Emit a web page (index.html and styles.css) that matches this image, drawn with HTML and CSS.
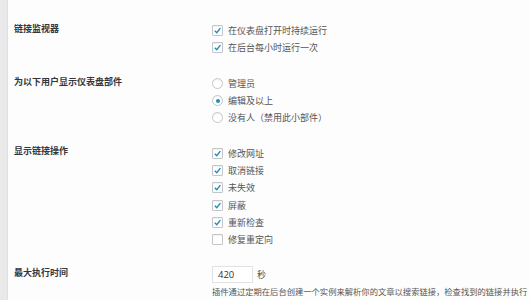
FILE: index.html
```
<!DOCTYPE html>
<html lang="zh-CN">
<head>
    <meta charset="UTF-8">
    <title>链接检查器设置</title>
    <link rel="stylesheet" href="styles.css">
</head>
<body>
    <div class="sidebar"></div>
    <div class="settings">
        <div class="row">
            <div class="row-label">链接监视器</div>
            <div class="row-field">
                <label class="opt"><span class="box on"><svg viewBox="0 0 10 10"><path d="M2 5.2 L4.2 7.4 L8.2 2.4"/></svg></span>在仪表盘打开时持续运行</label>
                <label class="opt"><span class="box on"><svg viewBox="0 0 10 10"><path d="M2 5.2 L4.2 7.4 L8.2 2.4"/></svg></span>在后台每小时运行一次</label>
            </div>
        </div>

        <div class="row">
            <div class="row-label">为以下用户显示仪表盘部件</div>
            <div class="row-field">
                <label class="opt"><span class="radio"></span>管理员</label>
                <label class="opt"><span class="radio on"></span>编辑及以上</label>
                <label class="opt"><span class="radio"></span>没有人（禁用此小部件）</label>
            </div>
        </div>

        <div class="row">
            <div class="row-label">显示链接操作</div>
            <div class="row-field">
                <label class="opt"><span class="box on"><svg viewBox="0 0 10 10"><path d="M2 5.2 L4.2 7.4 L8.2 2.4"/></svg></span>修改网址</label>
                <label class="opt"><span class="box on"><svg viewBox="0 0 10 10"><path d="M2 5.2 L4.2 7.4 L8.2 2.4"/></svg></span>取消链接</label>
                <label class="opt"><span class="box on"><svg viewBox="0 0 10 10"><path d="M2 5.2 L4.2 7.4 L8.2 2.4"/></svg></span>未失效</label>
                <label class="opt"><span class="box on"><svg viewBox="0 0 10 10"><path d="M2 5.2 L4.2 7.4 L8.2 2.4"/></svg></span>屏蔽</label>
                <label class="opt"><span class="box on"><svg viewBox="0 0 10 10"><path d="M2 5.2 L4.2 7.4 L8.2 2.4"/></svg></span>重新检查</label>
                <label class="opt"><span class="box"></span>修复重定向</label>
            </div>
        </div>

        <div class="row">
            <div class="row-label">最大执行时间</div>
            <div class="row-field">
                <div class="time">
                    <span class="num-input">420</span>
                    <span class="unit">秒</span>
                </div>
                <p class="desc">插件通过定期在后台创建一个实例来解析你的文章以搜索链接，检查找到的链接并执行HTTP请求，通常需要花费一些时间。这里你可以设置单个实例在被终止前最多可以运行多长时间。</p>
            </div>
        </div>
    </div>
</body>
</html>
```

FILE: styles.css
```
body {
    margin: 0;
    height: 300px;
    overflow: hidden;
    display: flex;
    background-color: #fdfdfd;
    font-family: "Noto Sans CJK SC", "Noto Sans", sans-serif;
    color: #555;
}

.sidebar {
    width: 7px;
    flex-shrink: 0;
    background-color: #e9e9e9;
    border-right: 1px solid #e0e0e0;
}

.settings {
    flex: 1;
    padding: 13px 0 0 6px;
}

.row {
    display: flex;
}

.row-label {
    width: 198px;
    flex-shrink: 0;
    padding-top: 7px;
    font-size: 9px;
    line-height: 17px;
    font-weight: bold;
    color: #32373c;
}

.row-field {
    flex: 1;
    padding: 9px 0;
}

.opt {
    display: flex;
    align-items: center;
    height: 17.3px;
    font-size: 9px;
    color: #555;
}

.box {
    width: 9px;
    height: 9px;
    border: 1px solid #c3c6c9;
    border-radius: 1px;
    background-color: #fff;
    box-shadow: inset 0 1px 1px rgba(0, 0, 0, 0.06);
    margin-right: 5px;
    display: flex;
}

.box svg {
    width: 9px;
    height: 9px;
    fill: none;
    stroke: #1e8cbe;
    stroke-width: 1.6;
}

.radio {
    width: 9px;
    height: 9px;
    border: 1px solid #c3c6c9;
    border-radius: 50%;
    background-color: #fff;
    box-shadow: inset 0 1px 1px rgba(0, 0, 0, 0.06);
    margin-right: 5px;
    display: flex;
    align-items: center;
    justify-content: center;
}

.radio.on::before {
    content: "";
    width: 4px;
    height: 4px;
    border-radius: 50%;
    background-color: #1e8cbe;
}

.time {
    display: flex;
    align-items: center;
}

.num-input {
    width: 34px;
    height: 15px;
    border: 1px solid #e2e2e2;
    background-color: #fff;
    padding-left: 5px;
    font-size: 9.5px;
    line-height: 15px;
    color: #333;
    font-family: "Open Sans", sans-serif;
}

.unit {
    margin-left: 4px;
    font-size: 9px;
}

.desc {
    margin: 2px 0 0;
    width: 318px;
    font-size: 8.3px;
    line-height: 13px;
    color: #555;
}
```
